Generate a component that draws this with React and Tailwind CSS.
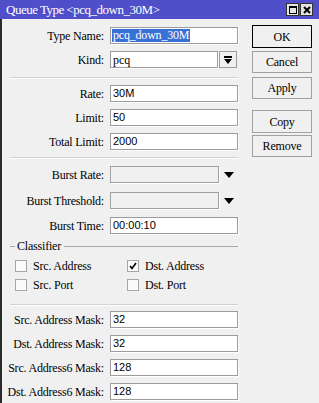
import React from 'react';

const serif = { fontFamily: '"Liberation Serif", "Times New Roman", serif' };

function Field({ label, value, className = '', sans = true, children }) {
  return (
    <div className={`flex items-center h-[17px] ${className}`}>
      <div className="w-[102px] text-right text-[12px] tracking-[-0.2px] leading-none whitespace-nowrap">{label}</div>
      {children || (
        <div
          className={`ml-[6px] w-[128px] h-[17px] bg-white border border-[#9c9c9c] shadow-[1px_1px_0_#ffffff] flex items-center pl-[2px] leading-none ${sans ? 'text-[11px] font-["Liberation_Sans",Arial,sans-serif]' : 'text-[12px]'}`}
        >
          {value}
        </div>
      )}
    </div>
  );
}

function Separator({ className = '' }) {
  return <div className={`ml-[8px] w-[228px] border-t border-[#d2d2d2] border-b border-b-white ${className}`} />;
}

function Btn({ children, primary, className = '' }) {
  return (
    <div
      className={`w-[60px] h-[22px] flex items-center justify-center text-[12px] tracking-[-0.2px] bg-[#f0f0f0] border ${primary ? 'border-black' : 'border-[#a0a0a0]'} ${className}`}
    >
      {children}
    </div>
  );
}

function Check({ checked, label, className = '' }) {
  return (
    <div className={`flex items-center h-[13px] ${className}`}>
      <div className="w-[12px] h-[12px] border border-[#a6a6a6] bg-[#fafafa] flex items-center justify-center">
        {checked && (
          <svg width="8" height="8" viewBox="0 0 8 8">
            <path d="M1 4 L3 6.5 L7 1" stroke="#000" strokeWidth="1.6" fill="none" />
          </svg>
        )}
      </div>
      <span className="ml-[6px] text-[12px] tracking-[-0.2px] leading-none whitespace-nowrap">{label}</span>
    </div>
  );
}

function DownArrow() {
  return (
    <svg width="10" height="6" viewBox="0 0 10 6" className="ml-[5px]">
      <path d="M0 0 H10 L5 6 Z" fill="#000" />
    </svg>
  );
}

export default function App() {
  return (
    <div className="w-[319px] h-[403px] overflow-hidden bg-[#f0f0f0] text-black" style={serif}>
      {/* Title bar */}
      <div className="h-[19px] bg-[#4f50c9] flex items-center pl-[6px] pr-[6px]">
        <span className="text-white text-[13px] tracking-[-0.5px] leading-none">Queue Type &lt;pcq_down_30M&gt;</span>
        <div className="ml-auto flex gap-[1px]">
          <div className="w-[13px] h-[13px] bg-[#e4e4e4] border border-[#333] flex items-center justify-center">
            <div className="w-[8px] h-[8px] border border-black border-t-2" />
          </div>
          <div className="w-[13px] h-[13px] bg-[#e4e4e4] border border-[#333] flex items-center justify-center">
            <svg width="8" height="8" viewBox="0 0 8 8">
              <path d="M1 1 L7 7 M7 1 L1 7" stroke="#000" strokeWidth="2" />
            </svg>
          </div>
        </div>
      </div>

      <div className="flex h-[384px] border-l-2 border-[#2b2b2b]">
        {/* Form */}
        <div className="w-[236px] flex flex-col">
          <Field label="Type Name:" className="mt-[8px]">
            <div className="ml-[6px] w-[128px] h-[17px] bg-white border border-[#9c9c9c] shadow-[1px_1px_0_#ffffff] flex items-center pl-[1px]">
              <span className="bg-[#3870d6] text-white text-[12px] tracking-[-0.2px] leading-[13px] px-[1px]">pcq_down_30M</span>
            </div>
          </Field>
          <Field label="Kind:" className="mt-[7px]">
            <div className="ml-[6px] w-[108px] h-[17px] bg-white border border-[#9c9c9c] shadow-[1px_1px_0_#ffffff] flex items-center pl-[2px] text-[12px] leading-none">
              pcq
            </div>
            <div className="ml-[1px] w-[18px] h-[17px] bg-[#f0f0f0] border border-[#9c9c9c] flex items-center justify-center">
              <svg width="8" height="8" viewBox="0 0 8 8">
                <rect x="0" y="0" width="8" height="2" fill="#000" />
                <path d="M0 3 H8 L4 8 Z" fill="#000" />
              </svg>
            </div>
          </Field>

          <Separator className="mt-[9px]" />

          <Field label="Rate:" value="30M" className="mt-[6px]" />
          <Field label="Limit:" value="50" className="mt-[7px]" />
          <Field label="Total Limit:" value="2000" className="mt-[7px]" />

          <Separator className="mt-[7px]" />

          <Field label="Burst Rate:" className="mt-[7px]">
            <div className="ml-[6px] w-[109px] h-[17px] bg-[#f0f0f0] border border-[#a0a0a0] shadow-[1px_1px_0_#ffffff]" />
            <DownArrow />
          </Field>
          <Field label="Burst Threshold:" className="mt-[9px]">
            <div className="ml-[6px] w-[109px] h-[17px] bg-[#f0f0f0] border border-[#a0a0a0] shadow-[1px_1px_0_#ffffff]" />
            <DownArrow />
          </Field>
          <Field label="Burst Time:" value="00:00:10" className="mt-[8px]" />

          {/* Classifier group */}
          <div className="mt-[5px] flex items-center h-[14px]">
            <div className="ml-[8px] w-[5px] border-t border-[#a8a8a8]" />
            <span className="ml-[2px] text-[12px] tracking-[-0.2px] leading-none">Classifier</span>
            <div className="ml-[3px] flex-1 border-t border-[#a8a8a8]" />
          </div>
          <div className="flex mt-[6px] pl-[13px]">
            <Check label="Src. Address" className="w-[112px]" />
            <Check checked label="Dst. Address" />
          </div>
          <div className="flex mt-[6px] pl-[13px]">
            <Check label="Src. Port" className="w-[112px]" />
            <Check label="Dst. Port" />
          </div>

          <Separator className="mt-[13px]" />

          <Field label="Src. Address Mask:" value="32" className="mt-[5px]" />
          <Field label="Dst. Address Mask:" value="32" className="mt-[7px]" />
          <Field label="Src. Address6 Mask:" value="128" className="mt-[7px]" />
          <Field label="Dst. Address6 Mask:" value="128" className="mt-[7px]" />
        </div>

        {/* Buttons */}
        <div className="ml-[14px] pt-[6px] flex flex-col">
          <Btn primary className="h-[23px]">OK</Btn>
          <Btn className="mt-[3px]">Cancel</Btn>
          <Btn className="mt-[4px] h-[21px]">Apply</Btn>
          <Btn className="mt-[11px] h-[23px]">Copy</Btn>
          <Btn className="mt-[2px] h-[21px]">Remove</Btn>
        </div>
      </div>
    </div>
  );
}
